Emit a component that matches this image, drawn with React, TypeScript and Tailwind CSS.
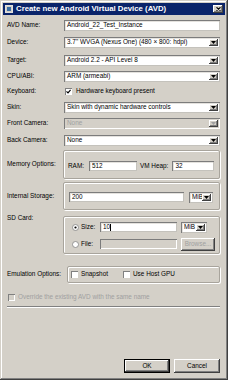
import React from "react";

// Classic Windows look: sunken fields, etched group boxes, raised buttons.
const sunken =
  "bg-white shadow-[inset_1px_1px_#7c7c7c,inset_-1px_-1px_#c4c2bc,inset_2px_2px_#e4e2de]";
const sunkenOff =
  "bg-[#d4d0c8] shadow-[inset_1px_1px_#7c7c7c,inset_-1px_-1px_#ffffff]";
const raised =
  "bg-[#d4d0c8] shadow-[inset_-1px_-1px_#404040,inset_1px_1px_#ffffff,inset_-2px_-2px_#808080]";
const etched = "border border-[#a8a49c] shadow-[1px_1px_0_#ffffff,inset_1px_1px_0_#ffffff] rounded-[2px]";

const Arrow = ({ disabled = false }: { disabled?: boolean }) => (
  <div className={`w-[9px] h-full flex items-center justify-center ${raised}`}>
    <svg width="5" height="3" viewBox="0 0 5 3">
      <path d="M0 0h5L2.5 3z" fill={disabled ? "#a0a0a0" : "#000"} />
    </svg>
  </div>
);

const Combo = ({ value, disabled = false, className = "" }: { value: string; disabled?: boolean; className?: string }) => (
  <div className={`h-[11px] flex items-stretch p-[1px] pr-[2px] py-[2px] ${className} ${disabled ? sunkenOff : sunken}`}>
    <div className={`flex-1 flex items-center pl-[2px] overflow-hidden whitespace-nowrap ${disabled ? "text-[#a0a0a0]" : ""}`}>
      {value}
    </div>
    <Arrow disabled={disabled} />
  </div>
);

const Field = ({ value, className = "", disabled = false, caret = false }: { value?: string; className?: string; disabled?: boolean; caret?: boolean }) => (
  <div className={`h-[10px] flex items-center pl-[3px] whitespace-nowrap ${className} ${disabled ? sunkenOff : sunken}`}>
    {value}
    {caret && <span className="inline-block w-[1px] h-[7px] bg-black" />}
  </div>
);

const Check = ({ checked = false, disabled = false }: { checked?: boolean; disabled?: boolean }) => (
  <div
    className={`w-[7px] h-[7px] flex items-center justify-center ${
      disabled ? "bg-[#d4d0c8]" : "bg-white"
    } shadow-[inset_1px_1px_#808080,inset_-1px_-1px_#ffffff]`}
  >
    {checked && (
      <svg width="5" height="5" viewBox="0 0 5 5">
        <path d="M0.5 2.3L2 3.8L4.6 0.8" stroke="#000" strokeWidth="1.2" fill="none" />
      </svg>
    )}
  </div>
);

const Radio = ({ checked = false }: { checked?: boolean }) => (
  <svg width="7" height="7" viewBox="0 0 7 7">
    <circle cx="3.5" cy="3.5" r="3" fill="#fff" stroke="#808080" strokeWidth="0.8" />
    {checked && <circle cx="3.5" cy="3.5" r="1.1" fill="#000" />}
  </svg>
);

const Row = ({ label, children, className = "" }: { label: string; children: React.ReactNode; className?: string }) => (
  <div className={`flex items-center h-[12px] ${className}`}>
    <div className="w-[57px] shrink-0">{label}</div>
    <div className="flex-1">{children}</div>
  </div>
);

export default function App() {
  return (
    <div
      className="w-[228px] h-[380px] bg-[#d4d0c8] text-black text-[6.4px] leading-none flex flex-col p-[3px] shadow-[inset_-1px_-1px_#404040,inset_1px_1px_#d4d0c8,inset_-2px_-2px_#808080,inset_2px_2px_#ffffff]"
      style={{ fontFamily: "'Liberation Sans', Arial, sans-serif" }}
    >
      {/* Title bar */}
      <div className="h-[12px] bg-[#0a246a] flex items-center px-[2px] gap-[3px] shrink-0">
        <div className="w-[8px] h-[8px] bg-[#d4d0c8] border border-[#e0e0e0] flex items-center justify-center">
          <div className="w-[4px] h-[4px] bg-[#3a6ea5]" />
        </div>
        <div className="flex-1 text-white font-bold text-[7.8px]">Create new Android Virtual Device (AVD)</div>
        <div className={`w-[10px] h-[8px] flex items-center justify-center ${raised}`}>
          <svg width="5" height="4" viewBox="0 0 5 4">
            <path d="M0.5 0.3L4.5 3.7M4.5 0.3L0.5 3.7" stroke="#000" strokeWidth="1.1" />
          </svg>
        </div>
      </div>

      <div className="flex flex-col pl-[4px] pr-[5px]">
        <Row label="AVD Name:" className="mt-[4px]">
          <Field value="Android_22_Test_Instance" className="h-[11px]" />
        </Row>
        <Row label="Device:" className="mt-[5px]">
          <Combo value={"3.7\" WVGA (Nexus One) (480 × 800: hdpi)"} />
        </Row>
        <Row label="Target:" className="mt-[6px]">
          <Combo value="Android 2.2 - API Level 8" />
        </Row>
        <Row label="CPU/ABI:" className="mt-[4px]">
          <Combo value="ARM (armeabi)" />
        </Row>
        <Row label="Keyboard:" className="mt-[3px]">
          <div className="flex items-center gap-[4px] pl-[1px]">
            <Check checked />
            <span>Hardware keyboard present</span>
          </div>
        </Row>
        <Row label="Skin:" className="mt-[4px]">
          <Combo value="Skin with dynamic hardware controls" />
        </Row>
        <Row label="Front Camera:" className="mt-[4px]">
          <Combo value="None" disabled />
        </Row>
        <Row label="Back Camera:" className="mt-[5px]">
          <Combo value="None" />
        </Row>

        {/* Memory options */}
        <div className="flex items-center mt-[4px]">
          <div className="w-[56px] shrink-0">Memory Options:</div>
          <div className={`flex-1 h-[29px] flex items-center pt-[3px] pl-[4px] pr-[5px] ${etched}`}>
            <span className="mr-[5px]">RAM:</span>
            <Field value="512" className="w-[48px]" />
            <span className="ml-[3px] mr-[4px]">VM Heap:</span>
            <Field value="32" className="flex-1" />
          </div>
        </div>

        {/* Internal storage */}
        <div className="flex items-center mt-[3px]">
          <div className="w-[56px] shrink-0">Internal Storage:</div>
          <div className={`flex-1 h-[28px] flex items-center pt-[2px] pl-[5px] pr-[6px] ${etched}`}>
            <Field value="200" className="flex-1" />
            <Combo value="MiB" className="w-[24px] ml-[5px]" />
          </div>
        </div>

        {/* SD card */}
        <div className="flex mt-[4px]">
          <div className="w-[56px] shrink-0 pt-[1px]">SD Card:</div>
          <div className={`flex-1 h-[38px] mt-[2px] flex flex-col justify-center gap-[5px] pt-[2px] pl-[8px] pr-[4px] ${etched}`}>
            <div className="flex items-center">
              <Radio checked />
              <span className="ml-[2px] w-[19px]">Size:</span>
              <Field value="10" caret className="w-[77px]" />
              <Combo value="MiB" className="w-[26px] ml-[4px]" />
            </div>
            <div className="flex items-center">
              <Radio />
              <span className="ml-[2px] w-[19px]">File:</span>
              <Field disabled className="w-[77px]" />
              <div className={`ml-[4px] flex-1 h-[13px] flex items-center justify-center text-[#a0a0a0] ${raised}`}>
                Browse...
              </div>
            </div>
          </div>
        </div>

        {/* Emulation */}
        <div className="flex items-center mt-[12px]">
          <div className="w-[60px] shrink-0">Emulation Options:</div>
          <div className={`flex-1 h-[17px] flex items-center pl-[3px] ${etched}`}>
            <Check />
            <span className="ml-[3px] w-[42px]">Snapshot</span>
            <Check />
            <span className="ml-[3px]">Use Host GPU</span>
          </div>
        </div>

        <div className="flex items-center mt-[11px] pl-[1px] text-[#a0a0a0]">
          <Check disabled />
          <span className="ml-[3px]">Override the existing AVD with the same name</span>
        </div>

        <div className="mt-[5px] h-[2px] border-t border-[#808080] border-b border-b-white" />
      </div>

      <div className="flex-1" />
      <div className="flex justify-end gap-[4px] pr-[5px] pb-[4px]">
        <div className="w-[46px] h-[14px] border border-black flex">
          <div className={`flex-1 flex items-center justify-center ${raised}`}>OK</div>
        </div>
        <div className={`w-[46px] h-[14px] flex items-center justify-center ${raised}`}>Cancel</div>
      </div>
    </div>
  );
}
